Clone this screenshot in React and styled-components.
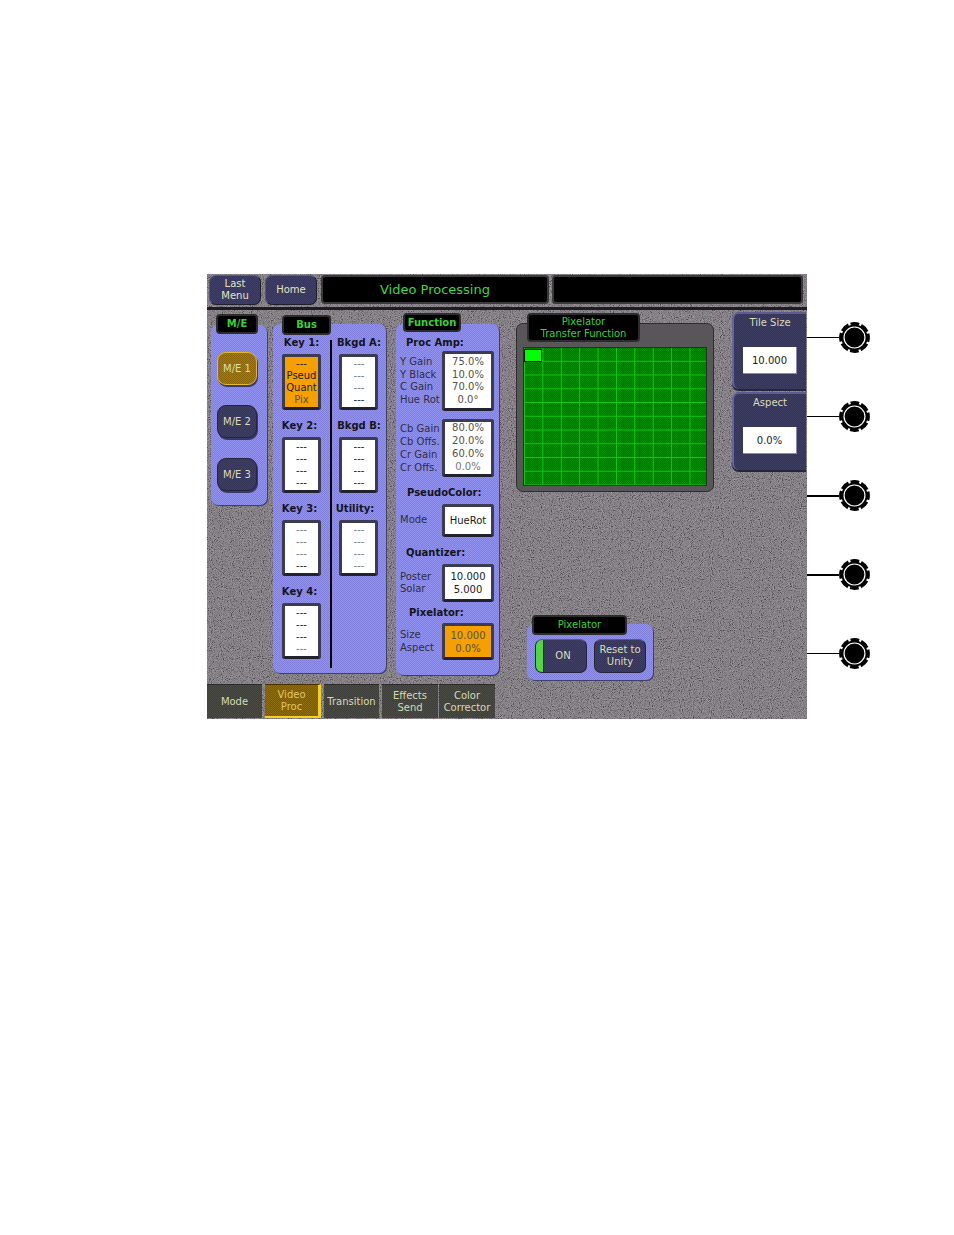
import React from "react";
import styled, { createGlobalStyle, css } from "styled-components";

const GlobalStyle = createGlobalStyle`
  body {
    margin: 0;
    background: #fff;
    font-family: "DejaVu Sans", sans-serif;
  }
`;

const dither = (dot, size = 2) => css`
  background-image: repeating-conic-gradient(${dot} 0 25%, transparent 0 50%);
  background-size: ${size}px ${size}px;
`;

const grain =
  "url(\"data:image/svg+xml,%3Csvg xmlns='http://www.w3.org/2000/svg' width='600' height='445'%3E%3Cfilter id='n'%3E%3CfeTurbulence type='fractalNoise' baseFrequency='0.9' numOctaves='2' seed='4'/%3E%3CfeColorMatrix values='1.8 0 0 0 -0.5 1.8 0 0 0 -0.5 1.8 0 0 0 -0.5 0 0 0 0 0.3'/%3E%3C/filter%3E%3Crect width='600' height='445' filter='url(%23n)'/%3E%3C/svg%3E\")";

const Page = styled.div`
  display: flex;
  align-items: flex-start;
  height: 1235px;
  box-sizing: border-box;
  padding: 274px 0 0 207px;
`;

const Screen = styled.div`
  width: 600px;
  height: 445px;
  display: flex;
  flex-direction: column;
  background-color: #7a787a;
  background-image: ${grain}, repeating-conic-gradient(#6e6870 0 25%, transparent 0 50%);
  background-size: 600px 445px, 2px 2px;
`;

const TopBar = styled.div`
  display: flex;
  gap: 3px;
  height: 36px;
  box-sizing: border-box;
  padding: 1px 0 0 2px;
  border-bottom: 3px solid #1d1d22;
`;

const NavButton = styled.div`
  width: 52px;
  height: 30px;
  margin-right: 1px;
  box-sizing: border-box;
  border-radius: 7px;
  display: flex;
  align-items: center;
  justify-content: center;
  text-align: center;
  font-size: 10px;
  line-height: 12px;
  color: #e4e4bc;
  background-color: #3f3f68;
  ${dither("#35355a")}
  border: 1px solid #1e1e2e;
  border-top-color: #5c5c88;
  border-left-color: #55557f;
`;

const TitleBar = styled.div`
  width: ${(p) => p.$width}px;
  height: 29px;
  box-sizing: border-box;
  border: 2px solid #3a3a3a;
  border-radius: 4px;
  background: #000;
  color: #3fd83f;
  font-size: 13px;
  display: flex;
  align-items: center;
  justify-content: center;
`;

const Main = styled.div`
  display: flex;
  align-items: flex-start;
  height: 374px;
  padding-left: 4px;
`;

const Panel = styled.div`
  position: relative;
  box-sizing: border-box;
  width: ${(p) => p.$width}px;
  height: ${(p) => p.$height}px;
  margin-top: ${(p) => p.$top}px;
  margin-left: ${(p) => p.$left || 0}px;
  border-radius: 7px;
  background-color: #9292f0;
  ${dither("#8080dc")}
  box-shadow: 1px 1px 0 #3f3f70;
`;

const Tab = styled.div`
  position: absolute;
  top: ${(p) => p.$top}px;
  left: ${(p) => p.$left}px;
  width: ${(p) => p.$width}px;
  height: ${(p) => p.$height || 20}px;
  box-sizing: border-box;
  border: 2px solid #2c2c2c;
  border-radius: 4px;
  background: #000;
  color: #38d038;
  font-size: 10px;
  font-weight: ${(p) => (p.$light ? 400 : 700)};
  line-height: 12px;
  text-align: center;
  display: flex;
  align-items: center;
  justify-content: center;
`;

const MeColumn = styled.div`
  display: flex;
  flex-direction: column;
  align-items: center;
  gap: 20px;
  padding-top: 27px;
  padding-right: 4px;
`;

const MeButton = styled.div`
  width: 40px;
  height: 33px;
  box-sizing: border-box;
  border-radius: 9px;
  display: flex;
  align-items: center;
  justify-content: center;
  font-size: 10px;
  color: #dcdcb8;
  border: 1px solid ${(p) => (p.$active ? "#e8b820" : "#24243a")};
  background-color: ${(p) => (p.$active ? "#a17a10" : "#3f3f64")};
  ${(p) => dither(p.$active ? "#8a6608" : "#35355a")}
  box-shadow: 1px 2px 0 #3a3a66;
`;

const BusGrid = styled.div`
  display: flex;
  height: 100%;
  padding-top: 9px;
  box-sizing: border-box;
`;

const BusColumn = styled.div`
  width: ${(p) => p.$width}px;
  display: flex;
  flex-direction: column;
  align-items: center;
  gap: 6px;
  ${(p) =>
    p.$divided &&
    css`
      border-right: 2px solid #000;
      height: 328px;
      margin-top: 7px;
      > :first-child {
        margin-top: -7px;
      }
    `}
`;

const BusSlot = styled.div`
  display: flex;
  flex-direction: column;
  align-items: center;
  width: 100%;
  box-sizing: border-box;
`;

const SlotLabel = styled.div`
  height: 21px;
  line-height: 20px;
  margin-left: ${(p) => p.$shift || 0}px;
  font-size: 10px;
  font-weight: 700;
  color: #14141c;
  white-space: nowrap;
`;

const ValueBox = styled.div`
  width: ${(p) => p.$width}px;
  height: ${(p) => p.$height}px;
  box-sizing: border-box;
  flex: none;
  border: 3px solid #3c3c50;
  border-bottom-color: #22222e;
  border-radius: 3px;
  display: flex;
  flex-direction: column;
  align-items: center;
  justify-content: center;
  background-color: ${(p) => (p.$active ? "#f6a000" : "#fff")};
  font-size: 10px;
  line-height: ${(p) => p.$line || 12}px;
  color: #1a1a1a;
`;

const BoxLine = styled.div`
  color: ${(p) => (p.$dim ? "#77777c" : p.$soft ? "#55504a" : "#1a1a1a")};
  white-space: nowrap;
`;

const FunctionBody = styled.div`
  display: flex;
  flex-direction: column;
  padding: 12px 5px 0 4px;
`;

const Heading = styled.div`
  height: 14px;
  line-height: 14px;
  margin-top: ${(p) => p.$top || 0}px;
  padding-left: ${(p) => p.$inset || 0}px;
  font-size: 10px;
  font-weight: 700;
  color: #14141c;
  white-space: nowrap;
`;

const FunctionRow = styled.div`
  display: flex;
  align-items: center;
  justify-content: space-between;
  margin-top: ${(p) => p.$top || 0}px;
`;

const RowLabels = styled.div`
  font-size: 10px;
  line-height: ${(p) => p.$line || 12.5}px;
  color: #2e2e46;
  white-space: nowrap;
`;

const CenterColumn = styled.div`
  width: 198px;
  margin-left: 17px;
`;

const GraphPanel = styled.div`
  position: relative;
  box-sizing: border-box;
  height: 169px;
  margin-top: 13px;
  padding: 23px 6px 0;
  border: 1px solid #2e2e2e;
  border-radius: 7px;
  background: #585658;
`;

const Graph = styled.div`
  position: relative;
  height: 139px;
  box-sizing: border-box;
  border: 1px solid #1a3a1a;
  background-color: #008a00;
  background-image:
    linear-gradient(#14c814 1px, transparent 1px),
    linear-gradient(90deg, #14c814 1px, transparent 1px),
    repeating-conic-gradient(#007400 0 25%, transparent 0 50%);
  background-size: 18.4px 13.75px, 18.4px 13.75px, 2px 2px;
  background-position: 0 -1px, 0 0, 0 0;
`;

const Marker = styled.div`
  position: absolute;
  top: 1px;
  left: 0;
  width: 18px;
  height: 13px;
  box-sizing: border-box;
  border: 1px solid #0a0a0a;
  background: #00ff00;
`;

const PixelatorRow = styled.div`
  display: flex;
  gap: 7px;
  padding: 15px 0 0 8px;
`;

const PixButton = styled.div`
  position: relative;
  width: 52px;
  height: 34px;
  box-sizing: border-box;
  border-radius: 7px;
  overflow: hidden;
  display: flex;
  align-items: center;
  justify-content: center;
  text-align: center;
  font-size: 10px;
  line-height: 12px;
  color: #ddddb8;
  padding-left: ${(p) => (p.$lamp ? 4 : 0)}px;
  background-color: #3f3f64;
  ${dither("#35355a")}
  border: 1px solid #24243a;
  border-top-color: #5a5a84;
`;

const Lamp = styled.span`
  position: absolute;
  left: 0;
  top: 0;
  bottom: 0;
  width: 7px;
  background: #4fd83f;
  border-right: 1px solid #14301a;
`;

const SideColumn = styled.div`
  width: 74px;
  margin-left: 18px;
  display: flex;
  flex-direction: column;
  gap: 3px;
  padding-top: 2px;
`;

const SidePanel = styled.div`
  box-sizing: border-box;
  height: ${(p) => p.$height}px;
  border-radius: 7px 0 0 7px;
  border-left: 2px solid #6464a0;
  border-top: 2px solid #5c5c90;
  display: flex;
  flex-direction: column;
  align-items: center;
  background-color: #3d3d62;
  ${dither("#343454")}
  box-shadow: 0 2px 0 #26263a;
`;

const SideTitle = styled.div`
  height: 33px;
  padding-top: 1px;
  box-sizing: border-box;
  font-size: 10px;
  line-height: 16px;
  color: #dcdcb8;
`;

const SideValue = styled.div`
  width: 54px;
  height: 27px;
  box-sizing: border-box;
  background: #fff;
  display: flex;
  align-items: center;
  justify-content: center;
  font-size: 10px;
  color: #1a1a1a;
  border-right: 1px solid #8888b0;
  border-bottom: 1px solid #8888b0;
`;

const TabBar = styled.div`
  display: flex;
  gap: 3px;
  height: 35px;
`;

const ModeTab = styled.div`
  width: ${(p) => p.$width || 56}px;
  margin-left: ${(p) => p.$pull || 0}px;
  height: 34px;
  box-sizing: border-box;
  display: flex;
  align-items: center;
  justify-content: center;
  text-align: center;
  font-size: 10px;
  line-height: 12px;
  color: ${(p) => (p.$active ? "#e0c468" : "#d8d8b0")};
  background-color: ${(p) => (p.$active ? "#8e6c10" : "#4b4b46")};
  ${(p) => dither(p.$active ? "#7a5a08" : "#3e3e3a")}
  border-top: 1px solid ${(p) => (p.$active ? "#4a3000" : "#2c2c2c")};
  ${(p) =>
    p.$active &&
    css`
      border-right: 3px solid #f2d21e;
      border-bottom: 2px solid #f2d21e;
    `}
`;

const Callouts = styled.div`
  display: flex;
  flex-direction: column;
  padding-top: 24px;
`;

const Callout = styled.div`
  display: flex;
  align-items: center;
  height: 79px;
`;

const Leader = styled.div`
  width: 32px;
  height: ${(p) => p.$thick || 1}px;
  background: #000;
`;

const Knob = () => (
  <svg width="31" height="31" viewBox="0 0 32 32">
    <circle cx="16" cy="16" r="13.5" fill="#000" />
    <circle
      cx="16"
      cy="16"
      r="14.4"
      fill="none"
      stroke="#000"
      strokeWidth="3"
      strokeDasharray="9 2.3"
      strokeDashoffset="4.5"
    />
    <circle cx="16" cy="16" r="10.8" fill="#000" stroke="#fff" strokeWidth="1.2" />
  </svg>
);

const Lines = ({ items }) =>
  items.map(([text, tone], i) => (
    <BoxLine key={i} $dim={tone === "d"} $soft={tone === "s"}>
      {text}
    </BoxLine>
  ));

const dash = (tones) => [...tones].map((t) => ["---", t]);

const keysLeft = [
  { label: "Key 1:", lines: [["---"], ["Pseud"], ["Quant"], ["Pix", "s"]], active: true },
  { label: "Key 2:", lines: dash("xxxx"), shift: -4 },
  { label: "Key 3:", lines: dash("dddx"), shift: -4 },
  { label: "Key 4:", lines: dash("xxxd"), shift: -4 },
];

const keysRight = [
  { label: "Bkgd A:", lines: dash("dddx") },
  { label: "Bkgd B:", lines: dash("xxxx") },
  { label: "Utility:", lines: dash("dddd"), shift: -8 },
];

const BusKey = ({ label, lines, active, shift }) => (
  <BusSlot>
    <SlotLabel $shift={shift}>{label}</SlotLabel>
    <ValueBox $width={39} $height={56} $active={active}>
      <Lines items={lines} />
    </ValueBox>
  </BusSlot>
);

export default function App() {
  return (
    <Page>
      <GlobalStyle />
      <Screen>
        <TopBar>
          <NavButton>
            Last
            <br />
            Menu
          </NavButton>
          <NavButton>Home</NavButton>
          <TitleBar $width={228}>Video Processing</TitleBar>
          <TitleBar $width={251} />
        </TopBar>

        <Main>
          <Panel $width={56} $height={180} $top={15}>
            <Tab $top={-11} $left={5} $width={42}>
              M/E
            </Tab>
            <MeColumn>
              <MeButton $active>M/E 1</MeButton>
              <MeButton>M/E 2</MeButton>
              <MeButton>M/E 3</MeButton>
            </MeColumn>
          </Panel>

          <Panel $width={113} $height={349} $top={14} $left={6}>
            <Tab $top={-9} $left={9} $width={49}>
              Bus
            </Tab>
            <BusGrid>
              <BusColumn $width={58} $divided>
                {keysLeft.map((k) => (
                  <BusKey key={k.label} {...k} />
                ))}
              </BusColumn>
              <BusColumn $width={55}>
                {keysRight.map((k) => (
                  <BusKey key={k.label} {...k} />
                ))}
              </BusColumn>
            </BusGrid>
          </Panel>

          <Panel $width={103} $height={351} $top={14} $left={10}>
            <Tab $top={-11} $left={7} $width={58} $height={19}>
              Function
            </Tab>
            <FunctionBody>
              <Heading $inset={6}>Proc Amp:</Heading>
              <FunctionRow $top={1}>
                <RowLabels>
                  Y Gain
                  <br />
                  Y Black
                  <br />
                  C Gain
                  <br />
                  Hue Rot
                </RowLabels>
                <ValueBox $width={52} $height={60} $line={12.5}>
                  <Lines items={[["75.0%", "s"], ["10.0%", "s"], ["70.0%", "s"], ["0.0°", "s"]]} />
                </ValueBox>
              </FunctionRow>
              <FunctionRow $top={8}>
                <RowLabels $line={13}>
                  Cb Gain
                  <br />
                  Cb Offs.
                  <br />
                  Cr Gain
                  <br />
                  Cr Offs.
                </RowLabels>
                <ValueBox $width={52} $height={58} $line={12.8}>
                  <Lines items={[["80.0%", "s"], ["20.0%", "s"], ["60.0%", "s"], ["0.0%", "d"]]} />
                </ValueBox>
              </FunctionRow>
              <Heading $top={9} $inset={7}>
                PseudoColor:
              </Heading>
              <FunctionRow $top={4}>
                <RowLabels>Mode</RowLabels>
                <ValueBox $width={52} $height={33}>
                  HueRot
                </ValueBox>
              </FunctionRow>
              <Heading $top={9} $inset={6}>
                Quantizer:
              </Heading>
              <FunctionRow $top={4}>
                <RowLabels>
                  Poster
                  <br />
                  Solar
                </RowLabels>
                <ValueBox $width={52} $height={38} $line={13}>
                  <Lines items={[["10.000"], ["5.000"]]} />
                </ValueBox>
              </FunctionRow>
              <Heading $top={4} $inset={9}>
                Pixelator:
              </Heading>
              <FunctionRow $top={3}>
                <RowLabels>
                  Size
                  <br />
                  Aspect
                </RowLabels>
                <ValueBox $width={52} $height={37} $line={13} $active>
                  <Lines items={[["10.000", "s"], ["0.0%", "s"]]} />
                </ValueBox>
              </FunctionRow>
            </FunctionBody>
          </Panel>

          <CenterColumn>
            <GraphPanel>
              <Tab $top={-11} $left={10} $width={113} $height={29} $light>
                Pixelator
                <br />
                Transfer Function
              </Tab>
              <Graph>
                <Marker />
              </Graph>
            </GraphPanel>
            <Panel $width={126} $height={56} $top={132} $left={11}>
              <Tab $top={-9} $left={5} $width={95} $light>
                Pixelator
              </Tab>
              <PixelatorRow>
                <PixButton $lamp>
                  <Lamp />
                  ON
                </PixButton>
                <PixButton>
                  Reset to
                  <br />
                  Unity
                </PixButton>
              </PixelatorRow>
            </Panel>
          </CenterColumn>

          <SideColumn>
            <SidePanel $height={77}>
              <SideTitle>Tile Size</SideTitle>
              <SideValue>10.000</SideValue>
            </SidePanel>
            <SidePanel $height={78}>
              <SideTitle>Aspect</SideTitle>
              <SideValue>0.0%</SideValue>
            </SidePanel>
          </SideColumn>
        </Main>

        <TabBar>
          <ModeTab $width={55}>Mode</ModeTab>
          <ModeTab $active>
            Video
            <br />
            Proc
          </ModeTab>
          <ModeTab $width={55}>Transition</ModeTab>
          <ModeTab>
            Effects
            <br />
            Send
          </ModeTab>
          <ModeTab $pull={-2}>
            Color
            <br />
            Corrector
          </ModeTab>
        </TabBar>
      </Screen>

      <Callouts>
        {[1, 1, 2, 2, 1].map((thick, i) => (
          <Callout key={i}>
            <Leader $thick={thick} />
            <Knob />
          </Callout>
        ))}
      </Callouts>
    </Page>
  );
}
